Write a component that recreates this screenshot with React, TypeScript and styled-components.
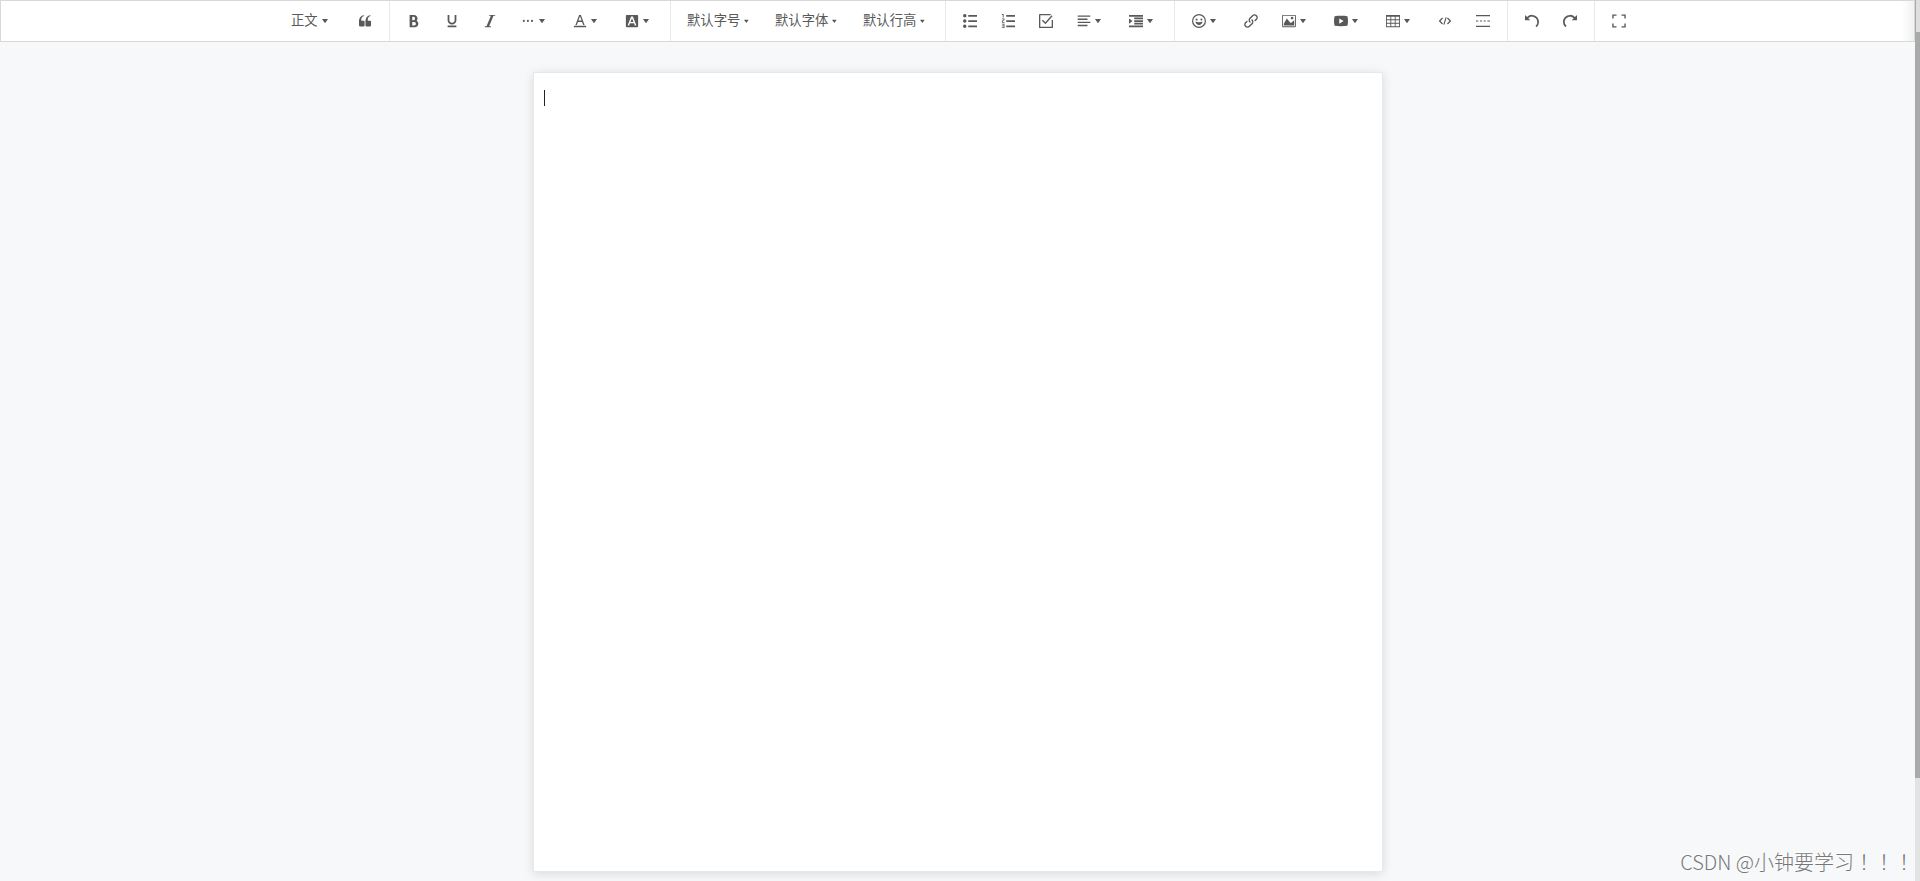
import React from 'react';
import styled, { createGlobalStyle } from 'styled-components';

const GlobalStyle = createGlobalStyle`
  * { box-sizing: border-box; }
  html, body { margin: 0; height: 100%; overflow: hidden; }
  #root { height: 100%; }
  body {
    font-family: "Liberation Sans", "Noto Sans CJK SC", sans-serif;
    background: #f6f8fa;
  }
`;

const Shell = styled.div`
  position: relative;
  display: flex;
  height: 881px;
  width: 1920px;
`;

const Main = styled.div`
  flex: 1;
  display: flex;
  flex-direction: column;
  align-items: center;
`;

const Toolbar = styled.div`
  display: flex;
  align-self: stretch;
  height: 42px;
  padding-left: 278px;
  border: 1px solid #d8d8d8;
  background: linear-gradient(90deg, transparent calc(100% - 12px), #f1f1f1) #fff;
`;

const Item = styled.div<{ $width?: number }>`
  display: flex;
  height: 40px;
  padding: 4px;
  width: ${p => (p.$width ? `${p.$width}px` : 'auto')};
`;

const Button = styled.button`
  display: flex;
  align-items: center;
  height: 32px;
  padding: 0 8px;
  border: 0;
  background: transparent;
  color: #595959;
  white-space: nowrap;
`;

const Label = styled.span<{ $shift: number }>`
  font: 400 13.333px/20px "Noto Sans CJK SC", sans-serif;
  margin-left: ${p => -p.$shift}px;
  margin-right: ${p => p.$shift}px;
  padding-bottom: 2px;
`;

const Svg = styled.svg<{ $size: number }>`
  display: block;
  flex: none;
  width: ${p => p.$size}px;
  height: ${p => p.$size}px;
  fill: #595959;
`;

const Divider = styled.div`
  width: 1px;
  height: 40px;
  margin: 0 5px;
  background: #e8e8e8;
`;

const Page = styled.div`
  width: 850px;
  height: 800px;
  margin: 30px 0 0 1px;
  padding: 17px 10px;
  background: #fff;
  border: 1px solid #e8e8e8;
  box-shadow: 0 2px 10px rgba(0, 0, 0, 0.12);
`;

const Caret = styled.div`
  width: 1px;
  height: 16px;
  background: #222;
`;

const ScrollTrack = styled.div`
  width: 5px;
  height: 881px;
  background: #e2e3e4;
`;

const ScrollCap = styled.div`
  height: 32px;
  border-left: 1px solid #a8a8a8;
  background: #dedede;
`;

const ScrollThumb = styled.div`
  height: 746px;
  background: #a9aaaa;
`;

const Watermark = styled.div`
  position: absolute;
  right: 6px;
  bottom: 5px;
  font: 300 20px/28px "Noto Sans CJK SC", sans-serif;
  color: #777;
  text-shadow: -1px -1px 0 #fff;
  white-space: nowrap;
`;

const Exclaim = styled.span`
  font-family: "Noto Sans CJK TC", sans-serif;
`;

const PATHS: Record<string, string> = {
  caret: 'M498.7 655.8l-197.6-268.1c-8.1-10.9-.3-26.4 13.3-26.4h395.2c13.6 0 21.4 15.4 13.3 26.4l-197.6 268.1c-6.6 9-20 9-26.6 0z',
  quote: 'M894.6 907.1H605.4c-32.6 0-59-26.4-59-59V608.2l-4-14.9c0-315.9 125.5-485.1 376.5-507.5v59.8C752.7 180.4 711.3 315.8 711.3 442.4v41.2l31.5 12.3h151.8c32.6 0 59 26.4 59 59v293.2c0 32.5-26.4 59-59 59z m-472 0H133.4c-32.6 0-59-26.4-59-59V608.2l-4-14.9c0-315.9 125.5-485.1 376.5-507.5v59.8C280.7 180.4 239.3 315.8 239.3 442.4v41.2l31.5 12.3h151.8c32.6 0 59 26.4 59 59v293.2c0 32.5-26.4 59-59 59z',
  bold: 'M707.872 484.64A254.88 254.88 0 0 0 768 320c0-141.152-114.848-256-256-256H192v896h384c141.152 0 256-114.848 256-256a256.096 256.096 0 0 0-124.128-219.36zM384 192h101.504c55.968 0 101.504 57.408 101.504 128s-45.536 128-101.504 128H384V192z m159.008 640H384v-256h159.008c58.464 0 106.016 57.408 106.016 128s-47.552 128-106.016 128z',
  underline: 'M704 64h128v416c0 159.072-143.264 288-320 288s-320-128.928-320-288V64h128v416c0 40.16 18.24 78.688 51.36 108.512 36.896 33.216 86.848 51.488 140.64 51.488s103.744-18.304 140.64-51.488c33.12-29.792 51.36-68.352 51.36-108.512V64zM192 832h640v128H192z',
  italic: 'M896 64v64h-128L448 896h128v64H128v-64h128L576 128h-128V64z',
  more: 'M128 505.6a76.8 76.8 0 1 0 153.6 0 76.8 76.8 0 1 0-153.6 0zM428.8 505.6a76.8 76.8 0 1 0 153.6 0 76.8 76.8 0 1 0-153.6 0zM729.6 505.6a76.8 76.8 0 1 0 153.6 0 76.8 76.8 0 1 0-153.6 0z',
  color: 'M64 864h896v96H64zM360.58 576h302.85l81.53 224h102.16L579.24 64H444.77L176.89 800h102.16l81.53-224zM512 159.96L628.49 480H395.52L512 159.96z',
  background: 'M128 64h768a64 64 0 0 1 64 64v768a64 64 0 0 1-64 64H128a64 64 0 0 1-64-64V128a64 64 0 0 1 64-64zM445 190L190 834h115l58-155h298l58 155h115L579 190zM512 302L625 590H399z',
  bullets: 'M384 64h640v128H384V64z m0 384h640v128H384v-128z m0 384h640v128H384v-128zM0 128a128 128 0 1 1 256 0 128 128 0 0 1-256 0z m0 384a128 128 0 1 1 256 0 128 128 0 0 1-256 0z m0 384a128 128 0 1 1 256 0 128 128 0 0 1-256 0z',
  numbers: 'M384 832h640v128H384z m0-384h640v128H384z m0-384h640v128H384zM192 0v256H128V64H64V0zM128 526.016v50.016h128v64H64v-146.016l128-60V384H64v-64h192v146.016zM256 704v320H64v-64h128v-64H64v-64h128v-64H64v-64z',
  todo: 'M64 0H850V96H96V928H928V440H1024V960A64 64 0 0 1 960 1024H64A64 64 0 0 1 0 960V64A64 64 0 0 1 64 0zM210 490L285 415L465 595L915 100L990 170L470 745z',
  align: 'M768 793.6v102.4H51.2v-102.4h716.8z m204.8-230.4v102.4H51.2v-102.4h921.6z m-204.8-230.4v102.4H51.2v-102.4h716.8zM972.8 102.4v102.4H51.2V102.4h921.6z',
  indent: 'M0 64h1024v128H0z m384 192h640v128H384z m0 192h640v128H384z m0 192h640v128H384zM0 832h1024v128H0z m0-128V320l256 192z',
  emotion: 'M512 0a512 512 0 1 0 0 1024A512 512 0 0 0 512 0zM512 90a422 422 0 1 1 0 844A422 422 0 0 1 512 90zM260 400a75 75 0 1 0 150 0 75 75 0 1 0-150 0zM614 400a75 75 0 1 0 150 0 75 75 0 1 0-150 0zM260 550C380 630 644 630 764 550C750 880 274 880 260 550z',
  link: 'M440.224 635.776a51.84 51.84 0 0 1-36.768-15.232c-95.136-95.136-95.136-249.92 0-345.056l192-192C641.536 37.408 702.816 12.032 768 12.032s126.432 25.376 172.544 71.456c95.136 95.136 95.136 249.92 0 345.056l-87.776 87.776a51.968 51.968 0 1 1-73.536-73.536l87.776-87.776a140.16 140.16 0 0 0 0-197.984c-26.432-26.432-61.6-40.992-99.008-40.992s-72.544 14.56-99.008 40.992l-192 192a140.16 140.16 0 0 0 0 197.984 51.968 51.968 0 0 1-36.768 88.768zM256 1012a242.4 242.4 0 0 1-172.544-71.456c-95.136-95.136-95.136-249.92 0-345.056l87.776-87.776a51.968 51.968 0 1 1 73.536 73.536l-87.776 87.776a140.16 140.16 0 0 0 0 197.984c26.432 26.432 61.6 40.992 99.008 40.992s72.544-14.56 99.008-40.992l192-192a140.16 140.16 0 0 0 0-197.984 51.968 51.968 0 1 1 73.536-73.536c95.136 95.136 95.136 249.92 0 345.056l-192 192A242.4 242.4 0 0 1 256 1012z',
  image: 'M959.877 128l0.123 0.123v767.775l-0.123 0.122H64.102l-0.122-0.122V128.123l0.122-0.123h895.775zM960 64H64C28.795 64 0 92.795 0 128v768c0 35.205 28.795 64 64 64h896c35.205 0 64-28.795 64-64V128c0-35.205-28.795-64-64-64zM832 288.01c0 53.023-42.988 96.01-96.01 96.01s-96.01-42.987-96.01-96.01S682.967 192 735.99 192 832 234.988 832 288.01zM896 832H128V704l224.01-384 256 320h64l224.01-192z',
  video: 'M981.184 160.096C837.568 139.456 678.848 128 512 128S186.432 139.456 42.816 160.096C15.296 267.808 0 386.848 0 512s15.264 244.16 42.816 351.904C186.464 884.544 345.152 896 512 896s325.568-11.456 469.184-32.096C1008.704 756.192 1024 637.152 1024 512s-15.264-244.16-42.816-351.904zM384 704V320l320 192-320 192z',
  table: 'M0 64v896h1024V64H0z m384 576v-192h256v192H384z m256 64v192H384v-192h256z m0-512v192H384V192h256zM320 192v192H64V192h256z m-256 256h256v192H64v-192z m640 0h256v192h-256v-192z m0-64V192h256v192h-256zM64 704h256v192H64v-192z m640 192v-192h256v192h-256z',
  code: 'M300 265L365 330L185 512L365 695L300 760L52 512zM724 265L659 330L839 512L659 695L724 760L972 512zM555 240L635 262L470 784L390 762z',
  rule: 'M0 75h1024v92H0zM0 857h1024v92H0zM0 475h170v80H0zM290 475h150v80H290zM560 475h150v80H560zM830 475h194v80H830z',
  undo: 'M512 64A510.272 510.272 0 0 0 149.984 213.984L0.032 64v384h384L240.512 304.48A382.784 382.784 0 0 1 512.032 192c212.064 0 384 171.936 384 384 0 114.688-50.304 217.632-130.016 288l84.672 96a510.72 510.72 0 0 0 173.344-384c0-282.784-229.216-512-512-512z',
  redo: 'M0 576a510.72 510.72 0 0 0 173.344 384l84.672-96A383.136 383.136 0 0 1 128 576C128 363.936 299.936 192 512 192c106.048 0 202.048 42.976 271.52 112.48L640 448h384V64l-149.984 149.984A510.272 510.272 0 0 0 512 64C229.216 64 0 293.216 0 576z',
  fullscreen: 'M20 36H330V136H120V330H20zM694 36H1004V330H904V136H694zM20 694H120V888H330V988H20zM904 694H1004V988H694V888H904z',
};

function Icon({ name, size = 14 }: { name: string; size?: number }) {
  return (
    <Svg $size={size} viewBox="0 0 1024 1024" fillRule="evenodd">
      <path d={PATHS[name]} />
    </Svg>
  );
}

function Tool({ icon, menu }: { icon: string; menu?: boolean }) {
  return (
    <Item $width={menu ? 52 : 38}>
      <Button>
        <Icon name={icon} />
        {menu && <Icon name="caret" />}
      </Button>
    </Item>
  );
}

interface SelectProps {
  text: string;
  width: number;
  caret: number;
  shift?: number;
}

function Select({ text, width, caret, shift = 0 }: SelectProps) {
  return (
    <Item $width={width}>
      <Button>
        <Label $shift={shift}>{text}</Label>
        <Icon name="caret" size={caret} />
      </Button>
    </Item>
  );
}

export default function App() {
  return (
    <Shell>
      <GlobalStyle />
      <Main>
        <Toolbar>
          <Select text="正文" width={67} caret={14} />
          <Tool icon="quote" />
          <Divider />
          <Tool icon="bold" />
          <Tool icon="underline" />
          <Tool icon="italic" />
          <Tool icon="more" menu />
          <Tool icon="color" menu />
          <Tool icon="background" menu />
          <Divider />
          <Select text="默认字号" width={88} caret={10.67} shift={1} />
          <Select text="默认字体" width={88} caret={10.67} shift={1} />
          <Select text="默认行高" width={88} caret={10.67} shift={1} />
          <Divider />
          <Tool icon="bullets" />
          <Tool icon="numbers" />
          <Tool icon="todo" />
          <Tool icon="align" menu />
          <Tool icon="indent" menu />
          <Divider />
          <Tool icon="emotion" menu />
          <Tool icon="link" />
          <Tool icon="image" menu />
          <Tool icon="video" menu />
          <Tool icon="table" menu />
          <Tool icon="code" />
          <Tool icon="rule" />
          <Divider />
          <Tool icon="undo" />
          <Tool icon="redo" />
          <Divider />
          <Tool icon="fullscreen" />
        </Toolbar>
        <Page>
          <Caret />
        </Page>
      </Main>
      <ScrollTrack>
        <ScrollCap />
        <ScrollThumb />
      </ScrollTrack>
      <Watermark>
        CSDN @小钟要学习<Exclaim lang="zh-TW">！！！</Exclaim>
      </Watermark>
    </Shell>
  );
}
